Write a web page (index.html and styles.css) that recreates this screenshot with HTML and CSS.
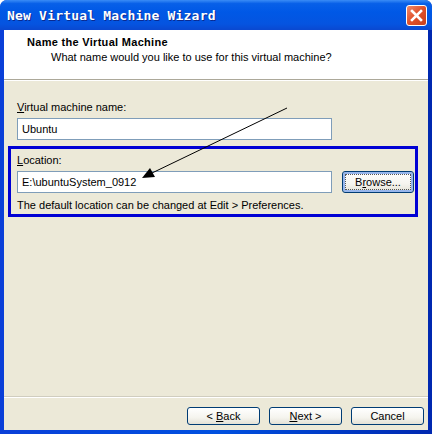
FILE: index.html
```html
<!DOCTYPE html>
<html lang="en">

<head>
  <meta charset="UTF-8">
  <meta name="viewport" content="width=device-width, initial-scale=1.0">
  <title>New Virtual Machine Wizard</title>
  <link rel="stylesheet" href="styles.css">
</head>

<body>
  <div class="window">
    <div class="titlebar">
      <span class="title">New Virtual Machine Wizard</span>
      <button class="close" aria-label="Close">
        <svg width="13" height="13" viewBox="0 0 13 13">
          <path d="M2 2 L11 11 M11 2 L2 11" stroke="#fff" stroke-width="2.6" stroke-linecap="square" />
        </svg>
      </button>
    </div>
    <div class="frame">
      <div class="header">
        <div class="heading">Name the Virtual Machine</div>
        <div class="subheading">What name would you like to use for this virtual machine?</div>
      </div>
      <div class="content">
        <div class="field">
          <label><u>V</u>irtual machine name:</label>
          <div class="textbox">Ubuntu</div>
        </div>
        <div class="highlight">
          <label><u>L</u>ocation:</label>
          <div class="row">
            <div class="textbox">E:\ubuntuSystem_0912</div>
            <button class="btn default"><span class="focus">B<u>r</u>owse...</span></button>
          </div>
          <p class="hint">The default location can be changed at Edit &gt; Preferences.</p>
        </div>
      </div>
      <div class="footer">
        <button class="btn">&lt; <u>B</u>ack</button>
        <button class="btn"><u>N</u>ext &gt;</button>
        <button class="btn">Cancel</button>
      </div>
    </div>
    <svg class="arrow" width="432" height="434" viewBox="0 0 432 434">
      <line x1="287" y1="108" x2="152" y2="173" stroke="#000" stroke-width="1" />
      <polygon points="142,178 150,168 155,177" fill="#000" />
    </svg>
  </div>
</body>

</html>
```

FILE: styles.css
```css
* {
  box-sizing: border-box;
}

body {
  margin: 0;
  font-family: "Liberation Sans", Arial, sans-serif;
  font-size: 11px;
  color: #000;
}

.window {
  position: relative;
  width: 432px;
  height: 434px;
  display: flex;
  flex-direction: column;
  background: linear-gradient(to right, #0a3fd8, #0050e0 50%, #0028b0);
  border-radius: 7px 7px 0 0;
  overflow: hidden;
}

.titlebar {
  height: 30px;
  display: flex;
  align-items: center;
  justify-content: space-between;
  padding: 0 5px 0 7px;
  background: linear-gradient(to bottom, #3a8cf6 0%, #0860e8 12%, #0058e6 40%, #0554e0 80%, #0a48d0 100%);
}

.title {
  color: #fff;
  font-family: "DejaVu Sans Mono", "Liberation Mono", monospace;
  font-weight: bold;
  font-size: 13px;
  letter-spacing: 0.2px;
  text-shadow: 1px 1px 0 #0a2a90;
}

.close {
  width: 21px;
  height: 21px;
  padding: 0;
  border: 1px solid #fff;
  border-radius: 3px;
  background: linear-gradient(135deg, #f08a6a, #e0502a 50%, #c8401c);
  display: flex;
  align-items: center;
  justify-content: center;
}

.frame {
  flex: 1;
  display: flex;
  flex-direction: column;
  margin: 0 4px 4px 4px;
  background: #ece9d8;
}

.header {
  height: 50px;
  background: #fff;
  border-bottom: 1px solid #aca899;
  box-shadow: 0 1px 0 #fff;
  padding: 6px 0 0 23px;
}

.heading {
  font-weight: bold;
  line-height: 13px;
  letter-spacing: 0.3px;
}

.subheading {
  padding-left: 24px;
  margin-top: 2px;
  line-height: 13px;
}

.content {
  flex: 1;
  padding: 21px 0 0 4px;
}

.field {
  padding-left: 9px;
}

label {
  display: block;
  line-height: 13px;
  margin-bottom: 4px;
}

.textbox {
  width: 315px;
  height: 22px;
  border: 1px solid #7f9db9;
  background: #fff;
  padding: 3px 0 0 4px;
  line-height: 14px;
}

.highlight {
  width: 410px;
  height: 71px;
  margin-top: 6px;
  border: 3px solid #0000d4;
  padding: 5px 0 0 6px;
}

.row {
  display: flex;
  gap: 10px;
}

.btn {
  width: 73px;
  height: 18px;
  padding: 0;
  font-family: inherit;
  font-size: 11px;
  color: #000;
  border: 1px solid #003c74;
  border-radius: 3px;
  background: linear-gradient(to bottom, #fff, #f5f4ee 60%, #e3e1d6);
}

.row .btn {
  width: 72px;
  height: 22px;
}

.default {
  box-shadow: inset 0 0 0 2px #97b6ec;
  display: flex;
  align-items: center;
  justify-content: center;
}

.focus {
  display: flex;
  align-items: center;
  justify-content: center;
  width: 64px;
  height: 14px;
  outline: 1px dotted #555;
}

.hint {
  margin: 6px 0 0 0;
  line-height: 13px;
}

.footer {
  height: 34px;
  border-top: 1px solid #d0cdbf;
  box-shadow: inset 0 1px 0 #fff;
  display: flex;
  justify-content: flex-end;
  align-items: flex-start;
  gap: 9px;
  padding: 10px 4px 0 0;
}

.arrow {
  position: absolute;
  left: 0;
  top: 0;
  pointer-events: none;
}
```
